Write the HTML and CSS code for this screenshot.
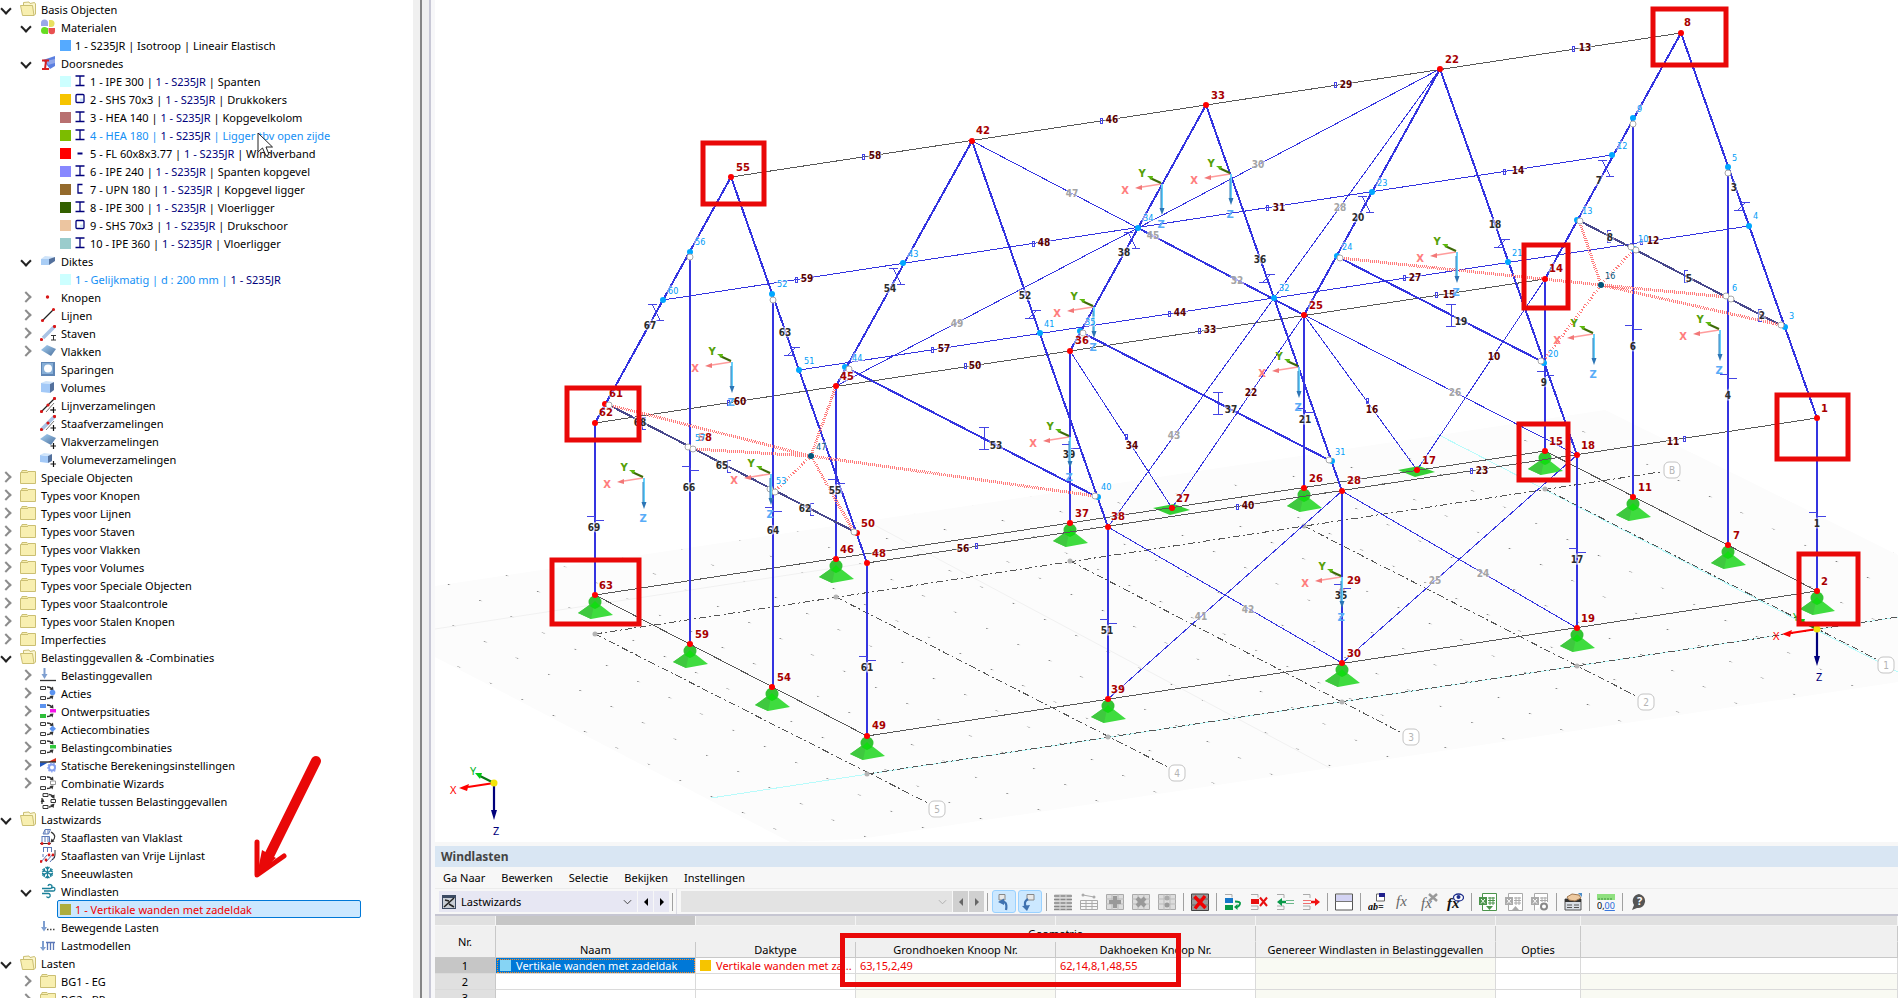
FILE: index.html
```html
<!DOCTYPE html>
<html lang="nl">
<head>
    <meta charset="UTF-8">
    <meta name="viewport" content="width=device-width, initial-scale=1.0">
    <title>Windlasten</title>
    <link rel="stylesheet" href="styles.css">
</head>
<body>
    <!-- icon sprites -->
    <svg class="sprites" aria-hidden="true">
        <defs>
            <linearGradient id="gBlue" x1="0" y1="0" x2="1" y2="1">
                <stop offset="0" stop-color="#a9d3f5"/><stop offset="1" stop-color="#4a6f9c"/>
            </linearGradient>
        </defs>
        <symbol id="folder" viewBox="0 0 16 16">
            <path d="M1.5 3.5L2 1.5H7L8 2.500H15.500V14.500H.5V3.500Z" fill="#f8efb0" stroke="#cbbf73"/>
            <path d="M1 3.500H8" stroke="#cbbf73"/>
        </symbol>
        <symbol id="folder-open" viewBox="0 0 16 16">
            <path d="M3.500 4V1.500L9 1L10 2.500L14.500 1.500L15.500 3V13L14 14.500" fill="#fbf6cf" stroke="#cbbf73"/>
            <path d="M.5 4.500H12.500L14 14.500H2.500Z" fill="#f8efb0" stroke="#cbbf73"/>
        </symbol>
        <symbol id="materials" viewBox="0 0 16 16">
            <path d="M1 7V4A3.500 3.500 0 0 1 8 4V7Z" fill="#9aa8e8"/>
            <path d="M9 8V1H11A3.500 3.500 0 0 1 11 8Z" fill="#e8e060"/>
            <circle cx="4.500" cy="11.500" r="3.500" fill="#66dd22"/><path d="M5 9H8V15H6Z" fill="#66dd22"/>
            <path d="M8.500 9H15V12A3.200 3.200 0 0 1 8.500 12Z" fill="#e85050"/>
        </symbol>
        <symbol id="sections" viewBox="0 0 16 16">
            <path d="M3 5L15 1V11L10 14Z" fill="#5b7fe0"/><path d="M6 6L15 4V8L8 10Z" fill="#8fa6ea"/>
            <path d="M2 5.500H9M2 14H9M6 6L5 14" stroke="#d82020" stroke-width="2" fill="none"/>
        </symbol>
        <symbol id="thickness" viewBox="0 0 16 16">
            <path d="M1 6L5 3L15 4L9 6Z" fill="#cfe4fa"/><path d="M1 6H9V12H1Z" fill="#a9cdf5"/><path d="M9 6L15 4V8L9 12Z" fill="#53709c"/>
        </symbol>
        <symbol id="node" viewBox="0 0 16 16"><circle cx="7.500" cy="8" r="1.700" fill="#d81818"/></symbol>
        <symbol id="line" viewBox="0 0 16 16">
            <path d="M2.500 13.500L13.500 2.500" stroke="#222" stroke-width="1.300"/>
            <path d="M2.500 13.500h.01M13.500 2.500h.01" stroke="#d81818" stroke-width="3.200" stroke-linecap="round"/>
        </symbol>
        <symbol id="member" viewBox="0 0 16 16">
            <path d="M3 13L14 2" stroke="#a9c2e4" stroke-width="3.500"/>
            <path d="M1.500 14.500h.01M14.500 1.500h.01" stroke="#d81818" stroke-width="3.200" stroke-linecap="round"/>
            <path d="M11 10.500H16M13.500 10.500V15M11 15H16" stroke="#333" fill="none"/>
        </symbol>
        <symbol id="surface" viewBox="0 0 16 16"><path d="M1 7L7 2L16 6L11 13Z" fill="url(#gBlue)"/></symbol>
        <symbol id="opening" viewBox="0 0 16 16">
            <rect x="1" y="1" width="14" height="14" fill="#5f86b5"/><rect x="2" y="2" width="11" height="11" fill="#86aed6"/>
            <circle cx="8" cy="7.500" r="4" fill="#fff"/>
        </symbol>
        <symbol id="solid" viewBox="0 0 16 16">
            <path d="M1 4L6 2L14 3L10 5Z" fill="#cfe4fa"/><path d="M1 4L10 5V14L1 13Z" fill="#a3c9f7"/><path d="M10 5L14 3V11L10 14Z" fill="#53709c"/>
        </symbol>
        <symbol id="plus" viewBox="0 0 16 16"><path d="M13.500 10V16M10.500 13H16" stroke="#111" stroke-width="1.200"/></symbol>
        <symbol id="lineset" viewBox="0 0 16 16">
            <path d="M6 15L14 6M10 13L14 13" stroke="#777"/>
            <path d="M1.500 14.500L14.500 1.500" stroke="#222" stroke-width="1.300"/>
            <path d="M1.500 14.500h.01M8 8h.01M14.500 1.500h.01" stroke="#d81818" stroke-width="3.200" stroke-linecap="round"/>
            <use href="#plus"/>
        </symbol>
        <symbol id="memberset" viewBox="0 0 16 16">
            <path d="M6 15L14 6" stroke="#777"/>
            <path d="M2 14L14.500 1.500" stroke="#a9c2e4" stroke-width="3.500"/>
            <path d="M1.500 14.500h.01M8 8h.01M14.500 1.500h.01" stroke="#d81818" stroke-width="3.200" stroke-linecap="round"/>
            <use href="#plus"/>
        </symbol>
        <symbol id="surfaceset" viewBox="0 0 16 16"><path d="M0 6L7 1L16 5L11 12Z" fill="url(#gBlue)"/><use href="#plus"/></symbol>
        <symbol id="solidset" viewBox="0 0 16 16">
            <path d="M0 4L8 5V12L0 11Z" fill="#a3c9f7"/><path d="M0 4L4 2L12 3L8 5Z" fill="#cfe4fa"/><path d="M8 5L12 3V10L8 12Z" fill="#53709c"/>
            <use href="#plus"/>
        </symbol>
        <symbol id="loadcase" viewBox="0 0 16 16">
            <path d="M4.500 1V8" stroke="#7f9fd0" stroke-width="2"/><path d="M1.500 7H7.500L4.500 12Z" fill="#7f9fd0"/>
            <path d="M0 13.500H16" stroke="#333" stroke-width="1.300"/>
        </symbol>
        <symbol id="flow" viewBox="0 0 16 16">
            <path d="M.6 1.600H5.500V4.500H.6ZM.6 11.600H5.500V14.500H.6Z" fill="#fff" stroke="#333"/>
            <path d="M7 2Q11 2 12 4.500M7 13.500Q11 13.500 12 11" stroke="#333" stroke-width="1.300" fill="none"/>
            <path d="M9.500 4.500L13 1.500L13.500 5.500ZM9.500 11L13.500 10.500L12.500 14.500Z" fill="#333"/>
        </symbol>
        <symbol id="actions" viewBox="0 0 16 16"><use href="#flow"/><circle cx="12.500" cy="7.500" r="2.800" fill="#5c94f0"/></symbol>
        <symbol id="design" viewBox="0 0 16 16">
            <use href="#flow"/><path d="M0 1H6V5H0Z" fill="#5c94f0"/><path d="M0 11H6V15H0Z" fill="#2fbf3a"/><path d="M10 6H16V9.500H10Z" fill="#f512e8"/>
        </symbol>
        <symbol id="actioncomb" viewBox="0 0 16 16"><use href="#flow"/><path d="M12.500 4.500L16 7.800L12.500 11L9.500 7.800Z" fill="#5c94f0"/></symbol>
        <symbol id="loadcomb" viewBox="0 0 16 16"><use href="#flow"/><path d="M10 6H16V9.500H10Z" fill="#2fc83a"/></symbol>
        <symbol id="static" viewBox="0 0 16 16">
            <path d="M0 5.500H8L0 10Z" fill="#1f55c0"/><path d="M8 5L16 1V5Z" fill="#d8321c"/><path d="M0 5H16" stroke="#222" stroke-width="1.300"/>
            <circle cx="12" cy="10.500" r="3" fill="#fff" stroke="#86a0f0" stroke-width="2"/>
            <circle cx="12" cy="10.500" r="4.300" fill="none" stroke="#86a0f0" stroke-width="1.200" stroke-dasharray="1.500 1.500"/>
        </symbol>
        <symbol id="combwiz" viewBox="0 0 16 16"><use href="#flow"/><path d="M10.500 6H15.500V9.500H10.500Z" fill="#fff" stroke="#999"/></symbol>
        <symbol id="relation" viewBox="0 0 16 16">
            <path d="M3 .6H8V3.500H3ZM3 12.500H8V15.500H3ZM11 6.500H15.500V9.500H11Z" fill="#fff" stroke="#333"/>
            <path d="M9 1.500Q13 2 13.500 5M9 14Q13 14 13.500 11M2 5V11" stroke="#333" stroke-width="1.300" fill="none"/>
            <path d="M10.500 3.500L14.500 1.500L14.500 6ZM.5 9L3 5.500L4.500 9ZM10 12L14.500 10.500L13.500 15Z" fill="#333"/>
        </symbol>
        <symbol id="areaload" viewBox="0 0 16 16">
            <path d="M3 5L5 .5H10.500L8.500 5ZM5 1V5M8 1V5M2 8V13M5 8V13M8 8V13M1.500 7.500H9.500V13" stroke="#5b78b8" fill="none"/>
            <path d="M0 14.500H11" stroke="#333"/><path d="M2 14.500h.01M9 14.500h.01" stroke="#d81818" stroke-width="3" stroke-linecap="round"/>
            <path d="M11 3Q18 7 12 12.500" stroke="#333" stroke-width="1.200" fill="none"/><path d="M10.500 13.500L11.500 9.500L14.500 12.500Z" fill="#333"/>
        </symbol>
        <symbol id="lineload" viewBox="0 0 16 16">
            <path d="M3 .5H12M3.500 .5V5M7.500 .5V5M11.500 .5V5M1 15L7 8M6 15L13 7M10 15L15 9M3 7L3 10" stroke="#5b78b8" fill="none"/>
            <path d="M1 14.500h.01M6 13h.01M9 8h.01M13 8h.01" stroke="#d81818" stroke-width="2.800" stroke-linecap="round"/>
            <path d="M15 3V8Q15 12 12 13" stroke="#333" fill="none"/>
        </symbol>
        <symbol id="snow" viewBox="0 0 16 16">
            <path d="M7.500 1.500V13.500M2.300 4.500L12.700 10.500M2.300 10.500L12.700 4.500M5.500 2L7.500 4L9.500 2M5.500 13L7.500 11L9.500 13M2 7L4.700 6L4 3.200M13 7L10.300 6L11 3.200M2 8.500L4.700 9.200L4 12M13 8.500L10.300 9.200L11 12" stroke="#1b8099" stroke-width="1.300" fill="none"/>
        </symbol>
        <symbol id="wind" viewBox="0 0 16 16">
            <path d="M2 5.500H9.500A2 2 0 1 0 8 3M4 8H13A1.800 1.800 0 1 0 11.500 5.500M2 10.500H8A2 2 0 1 1 6.500 13.500" stroke="#1b8099" stroke-width="1.300" fill="none"/>
        </symbol>
        <symbol id="moving" viewBox="0 0 16 16">
            <path d="M4 2V9" stroke="#7f9fd0" stroke-width="2"/><path d="M1 8H7L4 12.500Z" fill="#7f9fd0"/>
            <path d="M7 10.500H15" stroke="#444" stroke-width="1.500" stroke-dasharray="1.500 1.500"/>
        </symbol>
        <symbol id="loadmodel" viewBox="0 0 16 16">
            <path d="M3 4V11" stroke="#7f9fd0" stroke-width="2"/><path d="M0 10H6L3 14Z" fill="#7f9fd0"/>
            <path d="M6 5.500H15M7.500 5.500V13M10.500 5.500V13M13.500 5.500V13" stroke="#5b78b8" stroke-width="1.300" fill="none"/>
        </symbol>
        <symbol id="ibeam" viewBox="0 0 10 12"><path d="M.5 1H9.500M5 1V10.500M.5 10.500H9.500" stroke="#00007b" stroke-width="1.300" fill="none"/></symbol>
        <symbol id="tube" viewBox="0 0 10 12"><rect x="1" y="1.500" width="8" height="8" rx="1" fill="#fff" stroke="#00007b" stroke-width="1.300"/><path d="M5 5.500H8V8.500H5Z" fill="#cfe6f8"/></symbol>
        <symbol id="flat" viewBox="0 0 10 12"><path d="M2.500 6.500H7.500" stroke="#00007b" stroke-width="2"/></symbol>
        <symbol id="channel" viewBox="0 0 10 12"><path d="M7.500 1.500H3V10H7.500" stroke="#00007b" stroke-width="1.300" fill="none"/></symbol>
    </svg>

    <div class="workspace">
        <nav class="navigator" aria-label="Navigator">
            <ul class="tree">
                <li><div class="row"><button class="tw open" aria-label="Inklappen"></button><svg class="ic"><use href="#folder-open"/></svg>Basis Objecten</div>
                    <ul>
                        <li><div class="row"><button class="tw open" aria-label="Inklappen"></button><svg class="ic"><use href="#materials"/></svg>Materialen</div>
                            <ul>
                                <li><div class="row item"><i class="sw sky"></i>1 - S235JR | Isotroop | Lineair Elastisch</div></li>
                            </ul>
                        </li>
                        <li><div class="row"><button class="tw open" aria-label="Inklappen"></button><svg class="ic"><use href="#sections"/></svg>Doorsnedes</div>
                            <ul>
                                <li><div class="row item"><i class="sw ice"></i><svg class="sec"><use href="#ibeam"/></svg><span>1 - IPE 300 | <b>1 - S235JR</b> | Spanten</span></div></li>
                                <li><div class="row item"><i class="sw amber"></i><svg class="sec"><use href="#tube"/></svg><span>2 - SHS 70x3 | <b>1 - S235JR</b> | Drukkokers</span></div></li>
                                <li><div class="row item"><i class="sw rose"></i><svg class="sec"><use href="#ibeam"/></svg><span>3 - HEA 140 | <b>1 - S235JR</b> | Kopgevelkolom</span></div></li>
                                <li><div class="row item unused"><i class="sw lime"></i><svg class="sec"><use href="#ibeam"/></svg><span>4 - HEA 180 | <b>1 - S235JR</b> | Ligger tbv open zijde</span></div></li>
                                <li><div class="row item"><i class="sw red"></i><svg class="sec"><use href="#flat"/></svg><span>5 - FL 60x8x3.77 | <b>1 - S235JR</b> | Windverband</span></div></li>
                                <li><div class="row item"><i class="sw violet"></i><svg class="sec"><use href="#ibeam"/></svg><span>6 - IPE 240 | <b>1 - S235JR</b> | Spanten kopgevel</span></div></li>
                                <li><div class="row item"><i class="sw brown"></i><svg class="sec"><use href="#channel"/></svg><span>7 - UPN 180 | <b>1 - S235JR</b> | Kopgevel ligger</span></div></li>
                                <li><div class="row item"><i class="sw forest"></i><svg class="sec"><use href="#ibeam"/></svg><span>8 - IPE 300 | <b>1 - S235JR</b> | Vloerligger</span></div></li>
                                <li><div class="row item"><i class="sw peach"></i><svg class="sec"><use href="#tube"/></svg><span>9 - SHS 70x3 | <b>1 - S235JR</b> | Drukschoor</span></div></li>
                                <li><div class="row item"><i class="sw teal"></i><svg class="sec"><use href="#ibeam"/></svg><span>10 - IPE 360 | <b>1 - S235JR</b> | Vloerligger</span></div></li>
                            </ul>
                        </li>
                        <li><div class="row"><button class="tw open" aria-label="Inklappen"></button><svg class="ic"><use href="#thickness"/></svg>Diktes</div>
                            <ul>
                                <li><div class="row item unused"><i class="sw ice"></i><span>1 - Gelijkmatig | d : 200 mm | <b>1 - S235JR</b></span></div></li>
                            </ul>
                        </li>
                        <li><div class="row"><button class="tw" aria-label="Uitklappen"></button><svg class="ic"><use href="#node"/></svg>Knopen</div></li>
                        <li><div class="row"><button class="tw" aria-label="Uitklappen"></button><svg class="ic"><use href="#line"/></svg>Lijnen</div></li>
                        <li><div class="row"><button class="tw" aria-label="Uitklappen"></button><svg class="ic"><use href="#member"/></svg>Staven</div></li>
                        <li><div class="row"><button class="tw" aria-label="Uitklappen"></button><svg class="ic"><use href="#surface"/></svg>Vlakken</div></li>
                        <li><div class="row leaf"><svg class="ic"><use href="#opening"/></svg>Sparingen</div></li>
                        <li><div class="row leaf"><svg class="ic"><use href="#solid"/></svg>Volumes</div></li>
                        <li><div class="row leaf"><svg class="ic"><use href="#lineset"/></svg>Lijnverzamelingen</div></li>
                        <li><div class="row leaf"><svg class="ic"><use href="#memberset"/></svg>Staafverzamelingen</div></li>
                        <li><div class="row leaf"><svg class="ic"><use href="#surfaceset"/></svg>Vlakverzamelingen</div></li>
                        <li><div class="row leaf"><svg class="ic"><use href="#solidset"/></svg>Volumeverzamelingen</div></li>
                    </ul>
                </li>
                <li><div class="row"><button class="tw" aria-label="Uitklappen"></button><svg class="ic"><use href="#folder"/></svg>Speciale Objecten</div></li>
                <li><div class="row"><button class="tw" aria-label="Uitklappen"></button><svg class="ic"><use href="#folder"/></svg>Types voor Knopen</div></li>
                <li><div class="row"><button class="tw" aria-label="Uitklappen"></button><svg class="ic"><use href="#folder"/></svg>Types voor Lijnen</div></li>
                <li><div class="row"><button class="tw" aria-label="Uitklappen"></button><svg class="ic"><use href="#folder"/></svg>Types voor Staven</div></li>
                <li><div class="row"><button class="tw" aria-label="Uitklappen"></button><svg class="ic"><use href="#folder"/></svg>Types voor Vlakken</div></li>
                <li><div class="row"><button class="tw" aria-label="Uitklappen"></button><svg class="ic"><use href="#folder"/></svg>Types voor Volumes</div></li>
                <li><div class="row"><button class="tw" aria-label="Uitklappen"></button><svg class="ic"><use href="#folder"/></svg>Types voor Speciale Objecten</div></li>
                <li><div class="row"><button class="tw" aria-label="Uitklappen"></button><svg class="ic"><use href="#folder"/></svg>Types voor Staalcontrole</div></li>
                <li><div class="row"><button class="tw" aria-label="Uitklappen"></button><svg class="ic"><use href="#folder"/></svg>Types voor Stalen Knopen</div></li>
                <li><div class="row"><button class="tw" aria-label="Uitklappen"></button><svg class="ic"><use href="#folder"/></svg>Imperfecties</div></li>
                <li><div class="row"><button class="tw open" aria-label="Inklappen"></button><svg class="ic"><use href="#folder-open"/></svg>Belastinggevallen &amp; -Combinaties</div>
                    <ul>
                        <li><div class="row"><button class="tw" aria-label="Uitklappen"></button><svg class="ic"><use href="#loadcase"/></svg>Belastinggevallen</div></li>
                        <li><div class="row"><button class="tw" aria-label="Uitklappen"></button><svg class="ic"><use href="#actions"/></svg>Acties</div></li>
                        <li><div class="row"><button class="tw" aria-label="Uitklappen"></button><svg class="ic"><use href="#design"/></svg>Ontwerpsituaties</div></li>
                        <li><div class="row"><button class="tw" aria-label="Uitklappen"></button><svg class="ic"><use href="#actioncomb"/></svg>Actiecombinaties</div></li>
                        <li><div class="row"><button class="tw" aria-label="Uitklappen"></button><svg class="ic"><use href="#loadcomb"/></svg>Belastingcombinaties</div></li>
                        <li><div class="row"><button class="tw" aria-label="Uitklappen"></button><svg class="ic"><use href="#static"/></svg>Statische Berekeningsinstellingen</div></li>
                        <li><div class="row"><button class="tw" aria-label="Uitklappen"></button><svg class="ic"><use href="#combwiz"/></svg>Combinatie Wizards</div></li>
                        <li><div class="row leaf"><svg class="ic"><use href="#relation"/></svg>Relatie tussen Belastinggevallen</div></li>
                    </ul>
                </li>
                <li><div class="row"><button class="tw open" aria-label="Inklappen"></button><svg class="ic"><use href="#folder-open"/></svg>Lastwizards</div>
                    <ul>
                        <li><div class="row leaf"><svg class="ic"><use href="#areaload"/></svg>Staaflasten van Vlaklast</div></li>
                        <li><div class="row leaf"><svg class="ic"><use href="#lineload"/></svg>Staaflasten van Vrije Lijnlast</div></li>
                        <li><div class="row leaf"><svg class="ic"><use href="#snow"/></svg>Sneeuwlasten</div></li>
                        <li><div class="row"><button class="tw open" aria-label="Inklappen"></button><svg class="ic"><use href="#wind"/></svg>Windlasten</div>
                            <ul>
                                <li><div class="row item selected"><i class="sw olive"></i>1 - Vertikale wanden met zadeldak</div></li>
                            </ul>
                        </li>
                        <li><div class="row leaf"><svg class="ic"><use href="#moving"/></svg>Bewegende Lasten</div></li>
                        <li><div class="row leaf"><svg class="ic"><use href="#loadmodel"/></svg>Lastmodellen</div></li>
                    </ul>
                </li>
                <li><div class="row"><button class="tw open" aria-label="Inklappen"></button><svg class="ic"><use href="#folder-open"/></svg>Lasten</div>
                    <ul>
                        <li><div class="row"><button class="tw" aria-label="Uitklappen"></button><svg class="ic"><use href="#folder"/></svg>BG1 - EG</div></li>
                        <li><div class="row"><button class="tw" aria-label="Uitklappen"></button><svg class="ic"><use href="#folder"/></svg>BG2 - BP</div></li>
                    </ul>
                </li>
            </ul>
            <svg class="pointer" viewBox="0 0 18 26" aria-hidden="true"><path d="M1 1V20L5.500 16L9 24L12 22.500L9 15H15.500Z" fill="#fff" stroke="#222"/></svg>
            <svg class="arrow" viewBox="250 750 76 132" aria-hidden="true">
                <path d="M316 761L267 860" class="shaft"/>
                <path d="M257 842V875L284 856" class="head"/>
                <path d="M257 875L262 850L276 858Z" fill="#e90808"/>
            </svg>
        </nav>
        <div class="splitter"></div>

        <main class="main">
            <svg class="model" viewBox="435 0 1463 842" preserveAspectRatio="xMinYMin slice" role="img" aria-label="Model">
                <defs>
                    <pattern id="dots" width="60" height="40" patternUnits="userSpaceOnUse" patternTransform="matrix(.968 -.148 .79 .405 447 584)">
                        <rect width="1.200" height="2.500" fill="#777"/>
                    </pattern>
                    <g id="support">
                        <path d="M0 6L18 20L-4 24L-17 18Z" fill="#3fdc3f"/><path d="M0 6L-4 24L-17 18Z" fill="#3fc83f"/>
                        <circle cy="7" r="6.500" fill="#32c532"/><path d="M0 6L5 11L0 14L-5 11Z" fill="#12dc12"/>
                    </g>
                    <g id="plate"><path d="M-19 0L2 -4L18 2L-2 7Z" fill="#35cf35"/></g>
                    <g id="axes" class="local">
                        <path d="M-1 0L-20 3" stroke="#ff9c9c" stroke-width="1.700"/><path d="M-27 4L-20 1V6Z" fill="#f27878"/>
                        <path d="M-1 -1L-12 -6" stroke="#3d6a08" stroke-width="2"/><path d="M-15 -8L-9 -8L-10 -4Z" fill="#5cb80a"/>
                        <path d="M0 0V25" stroke="#66d0fb" stroke-width="2"/><path d="M-1 4V26" stroke="#2f7cba"/><path d="M-2.500 24H2.500L0 31Z" fill="#2c75b5"/>
                        <text x="-37" y="10" fill="#ff7d7d">X</text><text x="-20" y="-7" fill="#55a008">Y</text><text x="-1" y="44" fill="#58acf8">Z</text>
                    </g>
                    <g id="global">
                        <path d="M0 0L-26 4" stroke="#f00" stroke-width="2.200"/><path d="M-35 5L-25 1L-27 8Z" fill="#f00"/>
                        <path d="M0 0L-14 -7" stroke="#0a7a14" stroke-width="2.200"/><path d="M-19 -10L-12 -10L-14 -4Z" fill="#00c814"/>
                        <path d="M0 0V29" stroke="#00007b" stroke-width="2.200"/><path d="M-3 27H3L0 37Z" fill="#00007b"/>
                        <circle r="3.500" fill="#f2e40a"/>
                        <text x="-44" y="11" fill="#f00">X</text><text x="-24" y="-8" fill="#00b41e">Y</text><text x="-1" y="52" fill="#00007b">Z</text>
                    </g>
                    <path id="iCol" d="M-8 -2H0M-1 -2L1 1.500M0 2H9"/>
                    <path id="iMid" d="M-5 -11H5M0 -11V11M-5 11H5"/>
                    <path id="iLeft" d="M-8 -8H1M-4 -8L4 8M0 8H8"/>
                    <path id="iRight" d="M-1 -4H8M4 -4L-4 4M-8 4H2"/>
                    <path id="iSlot" d="M-1 -2.500H1V2.500H-1Z"/>
                    <path id="iUpn" d="M3 -6H-1V6H3"/>
                </defs>

                <!-- work plane -->
                <path d="M435 586L1605 410L1898 555V682L860 839L790 842L435 657Z" fill="#fcfcfc"/>
                <path d="M435 586L1605 410L1898 555V682L860 839L790 842L435 657Z" fill="url(#dots)"/>
                <path class="faint" d="M435 629L867 563M867 521L1330 768"/>
                <path class="cyan" d="M711 798L1898 617M1437 434L1898 672"/>
                <path class="grid" d="M595 634L1660 472M867 774L1898 617M595 634L928 803M836 597L1168 767M1070 561L1402 733M1304 526L1638 697M1545 489L1880 661"/>
                <path class="gdot" d="M595 634h.01M867 774h.01M836 597h.01M1108 737h.01M1070 561h.01M1342 702h.01M1304 526h.01M1577 666h.01M1545 489h.01"/>
                <g class="bubble">
                    <rect x="929" y="801" width="16" height="16" rx="5"/><text x="937" y="813">5</text>
                    <rect x="1169" y="765" width="16" height="16" rx="5"/><text x="1177" y="777">4</text>
                    <rect x="1403" y="729" width="16" height="16" rx="5"/><text x="1411" y="741">3</text>
                    <rect x="1638" y="694" width="16" height="16" rx="5"/><text x="1646" y="706">2</text>
                    <rect x="1878" y="657" width="16" height="16" rx="5"/><text x="1886" y="669">1</text>
                    <rect x="1664" y="462" width="16" height="16" rx="5"/><text x="1672" y="474">B</text>
                </g>

                <!-- supports -->
                <use href="#support" x="595" y="595"/><use href="#support" x="690" y="644"/><use href="#support" x="772" y="687"/>
                <use href="#support" x="836" y="559"/><use href="#support" x="867" y="736"/><use href="#support" x="1070" y="523"/>
                <use href="#support" x="1108" y="699"/><use href="#support" x="1304" y="488"/><use href="#support" x="1342" y="663"/>
                <use href="#support" x="1545" y="451"/><use href="#support" x="1577" y="628"/><use href="#support" x="1633" y="497"/>
                <use href="#support" x="1728" y="545"/><use href="#support" x="1817" y="591"/>
                <use href="#plate" x="1172" y="508"/><use href="#plate" x="1417" y="470"/>

                <!-- lines, purlins and bracing -->
                <path class="edge" d="M731 177L1681 33M595 423L1545 279M867 563L1817 418M595 595L1545 451M867 736L1817 591M595 595L867 736M1545 451L1817 591"/>
                <path class="purlin" d="M663 300L1612 155M799 370L1749 226"/>
                <path class="brace" d="M972 141L1304 315L1577 455M1440 69L1138 228L836 386M1440 69L1274 298L1108 527M1070 351L1172 508L1304 315L1417 470L1545 279M1342 491L1108 699M1108 527L1342 663L1577 455M1342 491L1577 628"/>
                <path class="beam" d="M1138 228L1304 315M849 369L1095 496M1083 333L1329 460M1340 258L1541 361"/>
                <path class="beam" d="M731 177L595 423M731 177L867 563M972 141L836 386M972 141L1108 527M1206 105L1070 351M1206 105L1342 491M1440 69L1304 315M1440 69L1577 455M1681 33L1545 279M1681 33L1817 418"/>
                <path class="beam" d="M595 423V595M690 257V644M773 294V687M867 563V736M836 386V559M1070 351V523M1108 527V699M1304 315V488M1342 491V663M1545 279V451M1577 455V628M1633 118V497M1728 167V545M1817 418V591"/>
                <path class="gable" d="M609 405L857 533M1580 221L1784 327"/>
                <path class="stab" d="M609 405L811 456L1095 496M693 449L811 456M836 386L811 456L854 532M1340 258L1601 285L1727 297M1601 285L1781 325M1580 223L1601 285"/>
                <path class="stab loose" d="M811 456L775 491M1633 250L1601 285L1543 361"/>

                <!-- section glyphs -->
                <g class="glyph">
                    <use href="#iCol" x="595" y="518"/><use href="#iCol" x="690" y="468"/><use href="#iCol" x="773" y="509"/><use href="#iCol" x="836" y="481"/>
                    <use href="#iCol" x="867" y="658"/><use href="#iCol" x="1070" y="446"/><use href="#iCol" x="1108" y="621"/><use href="#iCol" x="1305" y="410"/>
                    <use href="#iCol" x="1342" y="586"/><use href="#iCol" x="1577" y="550"/><use href="#iCol" x="1817" y="514"/><use href="#iCol" x="1545" y="373"/>
                    <use href="#iCol" x="1633" y="327"/><use href="#iCol" x="1728" y="376"/>
                    <use href="#iMid" x="1218" y="403"/><use href="#iMid" x="984" y="438"/><use href="#iMid" x="1451" y="315"/>
                    <use href="#iLeft" x="656" y="312"/><use href="#iLeft" x="897" y="276"/><use href="#iLeft" x="1132" y="240"/><use href="#iLeft" x="1366" y="204"/><use href="#iLeft" x="1606" y="168"/>
                    <use href="#iRight" x="792" y="351"/><use href="#iRight" x="1033" y="314"/><use href="#iRight" x="1267" y="278"/><use href="#iRight" x="1502" y="243"/><use href="#iRight" x="1742" y="206"/>
                    <use href="#iUpn" x="643" y="423"/><use href="#iUpn" x="728" y="466"/><use href="#iUpn" x="811" y="509"/><use href="#iUpn" x="1608" y="236"/><use href="#iUpn" x="1685" y="276"/><use href="#iUpn" x="1759" y="315"/>
                    <use href="#iSlot" x="863" y="157"/><use href="#iSlot" x="796" y="280"/><use href="#iSlot" x="728" y="403"/><use href="#iSlot" x="1101" y="121"/>
                    <use href="#iSlot" x="1335" y="85"/><use href="#iSlot" x="1267" y="208"/><use href="#iSlot" x="1033" y="244"/><use href="#iSlot" x="932" y="350"/>
                    <use href="#iSlot" x="965" y="366"/><use href="#iSlot" x="1169" y="314"/><use href="#iSlot" x="1199" y="331"/><use href="#iSlot" x="1404" y="278"/>
                    <use href="#iSlot" x="1573" y="49"/><use href="#iSlot" x="1504" y="172"/><use href="#iSlot" x="1436" y="295"/><use href="#iSlot" x="1641" y="242"/>
                    <use href="#iSlot" x="1684" y="439"/><use href="#iSlot" x="1471" y="471"/><use href="#iSlot" x="1237" y="507"/><use href="#iSlot" x="976" y="546"/>
                    <use href="#iSlot" x="1126" y="437"/><use href="#iSlot" x="1367" y="401"/>
                </g>

                <!-- nodes -->
                <path class="dot blue" d="M690 252h.01M663 300h.01M772 294h.01M799 370h.01M845 367h.01M903 263h.01M1138 228h.01M1274 298h.01M1372 192h.01M1337 256h.01M1080 331h.01M1040 333h.01M1098 497h.01M1332 461h.01M1612 155h.01M1633 118h.01M1728 167h.01M1749 226h.01M1577 220h.01M1508 262h.01M1785 327h.01M1544 363h.01M1634 249h.01"/>
                <path class="dot red" d="M731 177h.01M605 404h.01M595 423h.01M836 386h.01M595 595h.01M690 644h.01M772 687h.01M857 533h.01M836 559h.01M867 563h.01M867 736h.01M972 141h.01M1206 105h.01M1440 69h.01M1681 33h.01M1304 315h.01M1070 351h.01M1108 527h.01M1070 523h.01M1108 699h.01M1172 508h.01M1304 488h.01M1342 491h.01M1342 663h.01M1417 470h.01M1545 279h.01M1817 418h.01M1817 591h.01M1728 545h.01M1633 497h.01M1545 451h.01M1577 455h.01M1577 628h.01"/>
                <path class="dot dark" d="M811 456h.01M1601 285h.01"/>
                <path class="dot dim" d="M1342 591h.01"/>
                <g class="hinge">
                    <circle cx="690" cy="257" r="3"/><circle cx="773" cy="300" r="3"/><circle cx="609" cy="405" r="3"/><circle cx="688" cy="447" r="3"/><circle cx="693" cy="449" r="3"/>
                    <circle cx="849" cy="369" r="3"/><circle cx="770" cy="489" r="3"/><circle cx="775" cy="492" r="3"/><circle cx="854" cy="532" r="3"/><circle cx="1083" cy="333" r="3"/>
                    <circle cx="1095" cy="496" r="3"/><circle cx="1329" cy="460" r="3"/><circle cx="1340" cy="258" r="3"/><circle cx="1541" cy="361" r="3"/><circle cx="1633" cy="124" r="3"/>
                    <circle cx="1728" cy="173" r="3"/><circle cx="1580" cy="221" r="3"/><circle cx="1631" cy="247" r="3"/><circle cx="1636" cy="250" r="3"/><circle cx="1726" cy="296" r="3"/>
                    <circle cx="1731" cy="299" r="3"/><circle cx="1781" cy="325" r="3"/>
                </g>

                <!-- member numbers -->
                <g class="num sec-num">
                    <text x="875" y="159">58</text><text x="807" y="282">59</text><text x="740" y="405">60</text><text x="1112" y="123">46</text><text x="1346" y="88">29</text>
                    <text x="1279" y="211">31</text><text x="1044" y="246">48</text><text x="944" y="352">57</text><text x="975" y="369">50</text><text x="1180" y="316">44</text>
                    <text x="1210" y="333">33</text><text x="1251" y="396">22</text><text x="1372" y="413">16</text><text x="1415" y="281">27</text><text x="1132" y="449">34</text>
                    <text x="963" y="552">56</text><text x="1248" y="509">40</text><text x="1585" y="51">13</text><text x="1518" y="174">14</text><text x="1653" y="244">12</text>
                    <text x="1449" y="298">15</text><text x="1494" y="360">10</text><text x="1482" y="474">23</text><text x="1673" y="445">11</text>
                </g>
                <g class="num beam-num">
                    <text x="650" y="329">67</text><text x="785" y="336">63</text><text x="890" y="292">54</text><text x="640" y="426">68</text><text x="689" y="491">66</text>
                    <text x="722" y="469">65</text><text x="594" y="531">69</text><text x="805" y="512">62</text><text x="773" y="534">64</text><text x="835" y="494">55</text>
                    <text x="867" y="671">61</text><text x="1358" y="221">20</text><text x="1124" y="256">38</text><text x="1260" y="263">36</text><text x="1025" y="299">52</text>
                    <text x="1231" y="413">37</text><text x="1305" y="423">21</text><text x="996" y="449">53</text><text x="1069" y="458">39</text><text x="1107" y="634">51</text>
                    <text x="1341" y="599">35</text><text x="1599" y="184">7</text><text x="1495" y="228">18</text><text x="1610" y="241">8</text><text x="1461" y="325">19</text>
                    <text x="1689" y="282">5</text><text x="1734" y="191">3</text><text x="1762" y="319">2</text><text x="1544" y="386">9</text><text x="1633" y="350">6</text>
                    <text x="1728" y="399">4</text><text x="1577" y="563">17</text><text x="1817" y="527">1</text>
                </g>
                <g class="num brace-num">
                    <text x="1072" y="197">47</text><text x="1258" y="168">30</text><text x="1340" y="211">28</text><text x="1153" y="239">45</text><text x="1237" y="284">32</text>
                    <text x="957" y="327">49</text><text x="1174" y="439">43</text><text x="1201" y="620">41</text><text x="1248" y="613">42</text><text x="1455" y="396">26</text>
                    <text x="1483" y="577">24</text><text x="1435" y="584">25</text>
                </g>

                <!-- local and global axes -->
                <g class="axis">
                    <use href="#axes" x="732" y="362"/><use href="#axes" x="644" y="478"/><use href="#axes" x="771" y="474"/><use href="#axes" x="1162" y="184"/>
                    <use href="#axes" x="1231" y="174"/><use href="#axes" x="1094" y="307"/><use href="#axes" x="1299" y="367"/><use href="#axes" x="1070" y="437"/>
                    <use href="#axes" x="1342" y="577"/><use href="#axes" x="1457" y="252"/><use href="#axes" x="1594" y="334"/><use href="#axes" x="1720" y="330"/>
                    <use href="#global" x="494" y="783"/><use href="#global" x="1817" y="629"/>
                </g>

                <!-- node numbers -->
                <g class="nid red-id">
                    <text x="698" y="441">58</text>
                    <text x="736" y="171">55</text><text x="609" y="397">61</text><text x="599" y="416">62</text><text x="840" y="380">45</text><text x="599" y="589">63</text>
                    <text x="695" y="638">59</text><text x="777" y="681">54</text><text x="861" y="527">50</text><text x="840" y="553">46</text><text x="872" y="557">48</text>
                    <text x="872" y="729">49</text><text x="976" y="134">42</text><text x="1211" y="99">33</text><text x="1445" y="63">22</text><text x="1684" y="26">8</text>
                    <text x="1309" y="309">25</text><text x="1075" y="344">36</text><text x="1111" y="520">38</text><text x="1075" y="517">37</text><text x="1111" y="693">39</text>
                    <text x="1176" y="502">27</text><text x="1309" y="482">26</text><text x="1347" y="484">28</text><text x="1347" y="657">30</text><text x="1347" y="584">29</text>
                    <text x="1422" y="464">17</text><text x="1549" y="272">14</text><text x="1821" y="412">1</text><text x="1821" y="585">2</text><text x="1733" y="539">7</text>
                    <text x="1638" y="491">11</text><text x="1549" y="445">15</text><text x="1581" y="449">18</text><text x="1581" y="622">19</text>
                </g>
                <g class="nid blue-id">
                    <text x="695" y="245">56</text><text x="668" y="294">60</text><text x="777" y="287">52</text><text x="804" y="364">51</text><text x="852" y="361">44</text>
                    <text x="908" y="257">43</text><text x="776" y="484">53</text><text x="1143" y="221">34</text><text x="1279" y="291">32</text><text x="1377" y="186">23</text>
                    <text x="1342" y="250">24</text><text x="1044" y="327">41</text><text x="1085" y="325">35</text><text x="1335" y="455">31</text><text x="1101" y="490">40</text>
                    <text x="1617" y="149">12</text><text x="1637" y="112">9</text><text x="1732" y="161">5</text><text x="1753" y="219">4</text><text x="1582" y="214">13</text>
                    <text x="1638" y="242">10</text><text x="1512" y="256">21</text><text x="1732" y="291">6</text><text x="1789" y="319">3</text><text x="1548" y="357">20</text>
                    <text x="816" y="450" class="dark-id">47</text><text x="1605" y="279" class="dark-id">16</text>
                    <text x="695" y="441">57</text>
                </g>

                <!-- marked corner nodes -->
                <g class="mark">
                    <rect x="703" y="143" width="61" height="61"/><rect x="567" y="388" width="72" height="52"/><rect x="552" y="560" width="87" height="64"/>
                    <rect x="1653" y="9" width="73" height="56"/><rect x="1524" y="245" width="44" height="63"/><rect x="1519" y="424" width="49" height="56"/>
                    <rect x="1777" y="395" width="71" height="64"/><rect x="1799" y="554" width="59" height="70"/>
                </g>
            </svg>

            <section class="tables">
                <h1 class="caption">Windlasten</h1>
                <div class="menubar">
                    <button>Ga Naar</button><button>Bewerken</button><button>Selectie</button><button>Bekijken</button><button>Instellingen</button>
                </div>
                <div class="toolbar">
                    <div class="combo">
                        <svg class="combo-ic" viewBox="0 0 14 14"><path d="M0 0H14V14H0Z" fill="#3b4a63"/><path d="M1 3H13V13H1Z" fill="#c9ced6"/><path d="M2 12L12 3M3 5L7 6M7 9L12 12" stroke="#222" stroke-width="1.500"/></svg>
                        <select aria-label="Tabelgroep"><option>Lastwizards</option></select>
                        <svg class="chev" viewBox="0 0 10 6"><path d="M1 1L5 5L9 1"/></svg>
                    </div>
                    <button class="step" aria-label="Vorige"><svg viewBox="0 0 6 8"><path d="M5 0V8L1 4Z"/></svg></button>
                    <button class="step" aria-label="Volgende"><svg viewBox="0 0 6 8"><path d="M1 0V8L5 4Z"/></svg></button>
                    <span class="sep"></span><span class="grip"></span>
                    <div class="combo off">
                        <select aria-label="Belastinggeval" disabled><option></option></select>
                        <svg class="chev" viewBox="0 0 10 6"><path d="M1 1L5 5L9 1"/></svg>
                    </div>
                    <button class="step off" aria-label="Vorig belastinggeval" disabled><svg viewBox="0 0 6 8"><path d="M5 0V8L1 4Z"/></svg></button>
                    <button class="step off" aria-label="Volgend belastinggeval" disabled><svg viewBox="0 0 6 8"><path d="M1 0V8L5 4Z"/></svg></button>
                    <span class="sep"></span>
                    <button class="tool on" aria-label="Selectie synchroniseren"><svg viewBox="0 0 18 18"><path d="M4 1.500H10V7H4Z" fill="#e8e8e8" stroke="#888"/><path d="M5 9Q13 7 11 17" stroke="#3f72b0" stroke-width="2.200" fill="none"/><path d="M3 9L9 5.500V12Z" fill="#3f72b0"/></svg></button>
                    <button class="tool on" aria-label="Weergave synchroniseren"><svg viewBox="0 0 18 18"><path d="M6 1.500H13V7H6Z" fill="#e8e8e8" stroke="#888"/><path d="M7 6Q2 9 5 14" stroke="#3f72b0" stroke-width="2.200" fill="none"/><path d="M1 13L9 12L6 18Z" fill="#3f72b0"/></svg></button>
                    <span class="sep"></span>
                    <button class="tool" aria-label="Tabel"><svg viewBox="0 0 18 18"><path d="M.5 1H17.500V17H.5Z" fill="#d8d8d8"/><path d="M0 3H18M0 6.500H18M0 10H18M0 13.500H18M0 16.500H18" stroke="#888" stroke-width="1.300"/><path d="M6 1V17M12 1V17" stroke="#d8d8d8"/></svg></button>
                    <button class="tool" aria-label="Lijnen in tabel"><svg viewBox="0 0 18 18"><path d="M3 2L14 4" stroke="#aaa"/><path d="M3 2h.01M14 4h.01" stroke="#aaa" stroke-width="3" stroke-linecap="round"/><path d="M.5 7.500H17.500V16.500H.5ZM.5 10.500H17.500M.5 13.500H17.500M6 7.500V16.500M12 7.500V16.500" stroke="#aaa" fill="none"/></svg></button>
                    <button class="tool" aria-label="Rij toevoegen"><svg viewBox="0 0 18 18"><path d="M.5 1.500H17.500V16.500H.5Z" fill="#dcdcdc" stroke="#aaa"/><path d="M0 6H18M0 11H18M6 1V17M12 1V17" stroke="#bbb"/><path d="M9 3V15M3 9H15" stroke="#999" stroke-width="4"/></svg></button>
                    <button class="tool" aria-label="Rij wissen"><svg viewBox="0 0 18 18"><path d="M.5 1.500H17.500V16.500H.5Z" fill="#dcdcdc" stroke="#aaa"/><path d="M0 6H18M0 11H18M6 1V17M12 1V17" stroke="#bbb"/><path d="M5 5L13 13M13 5L5 13" stroke="#999" stroke-width="4"/></svg></button>
                    <button class="tool" aria-label="Status"><svg viewBox="0 0 18 18"><path d="M.5 1.500H17.500V16.500H.5Z" fill="#dcdcdc" stroke="#aaa"/><path d="M0 6H18M0 11H18M6 1V17M12 1V17" stroke="#bbb"/><circle cx="9" cy="5" r="2.500" fill="#aaa"/><circle cx="9" cy="12" r="2.500" fill="#999"/></svg></button>
                    <span class="sep"></span>
                    <button class="tool" aria-label="Alles verwijderen"><svg viewBox="0 0 18 18"><path d="M.5 1H17.500V17.500H.5Z" fill="#999" stroke="#444"/><path d="M0 6H18M0 12H18" stroke="#666"/><path d="M3.500 3.500L14.500 15M14 3L4 15.500" stroke="#f00000" stroke-width="3.500"/></svg></button>
                    <span class="sep"></span>
                    <button class="tool" aria-label="Rij kopi&euml;ren"><svg viewBox="0 0 18 18"><path d="M1 1.500H8V4.500" stroke="#aaa" fill="none"/><path d="M1 5H9V10H1Z" fill="#1577c8"/><path d="M1 12H9V17H1Z" fill="#089a48"/><path d="M11 8.500Q17 8.500 16 11Q15 14 12 14" stroke="#089a48" stroke-width="1.800" fill="none"/><path d="M10 14L13.500 11V17Z" fill="#089a48"/></svg></button>
                    <button class="tool" aria-label="Rij verwijderen"><svg viewBox="0 0 18 18"><path d="M1 1.500H8V4.500M1 16.500H8V13H1" stroke="#aaa" fill="none"/><path d="M1 6H9V11H1Z" fill="#e81010"/><path d="M10 4.500L17 13M17 4.500L10 13" stroke="#e81010" stroke-width="2"/></svg></button>
                    <button class="tool" aria-label="Rij invoegen"><svg viewBox="0 0 18 18"><path d="M1 1.500H8V5M1 16.500H8V13H1" stroke="#aaa" fill="none"/><path d="M5 9H10" stroke="#089a48" stroke-width="2.500"/><path d="M1 9L6 5V13Z" fill="#089a48"/><path d="M10 7.500H18M10 10.500H18" stroke="#6cb88a"/></svg></button>
                    <button class="tool" aria-label="Rij uitnemen"><svg viewBox="0 0 18 18"><path d="M1 1.500H8V5M1 16.500H8V13H1" stroke="#aaa" fill="none"/><path d="M1 7.500H9M1 10.500H9" stroke="#f07070"/><path d="M9 9H14" stroke="#f01010" stroke-width="2.500"/><path d="M18 9L13 5V13Z" fill="#f01010"/></svg></button>
                    <span class="sep"></span>
                    <button class="tool" aria-label="Kolommen"><svg viewBox="0 0 18 18"><path d="M.5 1H17.500V17H.5Z" fill="#fff" stroke="#555"/><path d="M1 2H17V8H1Z" fill="#d3d3f3"/><path d="M.5 8.500H17.500" stroke="#777"/></svg></button>
                    <span class="sep"></span>
                    <button class="tool" aria-label="Commentaar"><svg viewBox="0 0 18 18"><path d="M8.500 1H16.500V8H8.500Z" fill="#fff" stroke="#666"/><path d="M11 0H17V4H11Z" fill="#20208c"/><text x="0" y="17" class="ab">ab=</text></svg></button>
                    <button class="tool" aria-label="Formule"><svg viewBox="0 0 18 18"><text x="2" y="13" class="fx">fx</text></svg></button>
                    <button class="tool" aria-label="Formule wissen"><svg viewBox="0 0 18 18"><text x="1" y="15" class="fx">fx</text><path d="M9 1L17 8M17 1L9 8" stroke="#999" stroke-width="2.500"/></svg></button>
                    <button class="tool" aria-label="Formule tonen"><svg viewBox="0 0 18 18"><text x="1" y="15" class="fx dark">fx</text><ellipse cx="12.500" cy="4.500" rx="5" ry="3.500" fill="#fff" stroke="#20308c" stroke-width="1.300"/><circle cx="12.500" cy="4" r="2" fill="#20308c"/></svg></button>
                    <span class="sep"></span>
                    <button class="tool" aria-label="Exporteren naar Excel"><svg viewBox="0 0 18 18"><path d="M3.500 .5H17.500V17.500H3.500Z" fill="#fff" stroke="#4c944c"/><path d="M0 4H8V12H0Z" fill="#4c944c"/><path d="M2 6L6 10.500M6 6L2 10.500" stroke="#fff"/><path d="M9 5H16M9 7.500H16M9 10H16M11 4V12M14 4V12" stroke="#4c944c"/><path d="M7 13H14L10.500 17Z" fill="#4c944c"/></svg></button>
                    <button class="tool" aria-label="Importeren uit Excel"><svg viewBox="0 0 18 18"><path d="M3.500 .5H17.500V17.500H3.500Z" fill="#fff" stroke="#aaa"/><path d="M0 4H8V12H0Z" fill="#aaa"/><path d="M2 6L6 10.500M6 6L2 10.500" stroke="#fff"/><path d="M9 5H16M9 7.500H16M9 10H16M11 4V12M14 4V12" stroke="#aaa"/><path d="M7 17H14L10.500 13Z" fill="#aaa"/></svg></button>
                    <button class="tool" aria-label="Excel-instellingen"><svg viewBox="0 0 18 18"><path d="M3.500 17.500V.5H16.500V9" fill="#fff" stroke="#aaa"/><path d="M0 4H8V12H0Z" fill="#aaa"/><path d="M2 6L6 10.500M6 6L2 10.500" stroke="#fff"/><path d="M9 5H16M9 7.500H16M11 4V9M14 4V9" stroke="#aaa"/><circle cx="13" cy="13.500" r="3" fill="#fff" stroke="#888" stroke-width="2"/></svg></button>
                    <span class="sep"></span>
                    <button class="tool" aria-label="Instellingen"><svg viewBox="0 0 18 18"><path d="M1 6H17V17H1Z" fill="#d8dde4" stroke="#555"/><path d="M1 6H17V9H1Z" fill="#333"/><path d="M3 12H8M10 12H15M3 14.500H8M10 14.500H15" stroke="#555"/><path d="M3 4L8 1L15 2L17 5L11 8L5 7Z" fill="#edc9a0" stroke="#a07850"/><path d="M14 0H18V4Z" fill="#4c8cc8"/></svg></button>
                    <span class="sep"></span>
                    <button class="tool" aria-label="Decimalen"><svg viewBox="0 0 18 18"><path d="M0 1H18V7H0Z" fill="#8fe07f"/><path d="M2 7V5M5 7V5M8 7V5M11 7V5M14 7V5" stroke="#3c8c3c"/><text x="0" y="16" class="dec">0,<tspan fill="#2468d8" text-decoration="underline">00</tspan></text></svg></button>
                    <span class="sep"></span>
                    <button class="tool" aria-label="Help"><svg viewBox="0 0 18 18"><path d="M9 1A7 7 0 1 1 7 15L2 17L4 12A7 7 0 0 1 9 1Z" fill="#555"/><text x="9.500" y="12" class="q">?</text></svg></button>
                </div>
                <div class="grid-wrap">
                    <table class="sheet">
                        <colgroup><col class="c-nr"><col class="c-name"><col class="c-type"><col class="c-node"><col class="c-node"><col class="c-gen"><col class="c-opt"><col></colgroup>
                        <thead>
                            <tr class="strip"><td></td><td class="cur"></td><td></td><td></td><td></td><td></td><td></td><td></td></tr>
                            <tr class="group"><th rowspan="2" scope="col" class="nr">Nr.</th><th class="flat"></th><th></th><th colspan="2" scope="colgroup">Geometrie</th><th></th><th></th><th></th></tr>
                            <tr class="names"><th scope="col">Naam</th><th scope="col">Daktype</th><th scope="col">Grondhoeken Knoop Nr.</th><th scope="col">Dakhoeken Knoop Nr.</th><th scope="col">Genereer Windlasten in Belastinggevallen</th><th scope="col">Opties</th><th></th></tr>
                        </thead>
                        <tbody>
                            <tr class="err"><th scope="row" class="cur">1</th><td class="active"><i class="sw aqua"></i>Vertikale wanden met zadeldak</td><td><i class="sw amber"></i>Vertikale wanden met za...</td><td>63,15,2,49</td><td>62,14,8,1,48,55</td><td class="ro"></td><td></td><td></td></tr>
                            <tr><th scope="row">2</th><td></td><td></td><td class="ro"></td><td></td><td class="ro"></td><td></td><td class="ro"></td></tr>
                            <tr><th scope="row">3</th><td></td><td></td><td class="ro"></td><td></td><td class="ro"></td><td></td><td class="ro"></td></tr>
                        </tbody>
                    </table>
                    <div class="frame"></div>
                </div>
            </section>
        </main>
    </div>
</body>
</html>
```
FILE: styles.css
```css
* {
    box-sizing: border-box;
}
body {
    margin: 0;
    font-family: "Noto Sans", "Open Sans", sans-serif;
    font-size: 11px;
    color: #000;
    background: #fff;
}
button, select {
    font: inherit;
    color: inherit;
    border: none;
    background: none;
    padding: 0;
    margin: 0;
}
.sprites {
    position: absolute;
    width: 0;
    height: 0;
}
.workspace {
    display: flex;
    height: 100vh;
    overflow: hidden;
}

/* navigator tree */
.navigator {
    position: relative;
    flex: 0 0 420px;
    overflow: hidden;
    border-right: 7px solid #f0f0f0;
}
.splitter {
    flex: 0 0 11px;
    background: #f0f0f0;
    border-left: 2px solid #868686;
    border-right: 2px solid #c8c8d6;
}
.tree, .tree ul {
    list-style: none;
    margin: 0;
    padding: 0;
}
.tree ul {
    padding-left: 20px;
}
.row {
    display: flex;
    align-items: center;
    height: 18px;
    padding-left: 1px;
    white-space: pre;
}
.row.leaf {
    padding-left: 20px;
}
.row b {
    font-weight: normal;
    color: #00007b;
}
.tw {
    width: 10px;
    height: 10px;
    margin-right: 9px;
    display: flex;
    align-items: center;
    justify-content: center;
}
.tw::before {
    content: "";
    width: 6px;
    height: 6px;
    border: solid #8c8c8c;
    border-width: 2px 2px 0 0;
    transform: rotate(45deg);
}
.tw.open::before {
    border-color: #222;
    border-width: 0 2px 2px 0;
}
.ic {
    width: 16px;
    height: 16px;
    margin-right: 5px;
    flex: none;
}
.item {
    margin: 0 52px 0 17px;
    padding-left: 3px;
}
.item .sec {
    width: 10px;
    height: 12px;
    margin-right: 5px;
    flex: none;
}
.item.unused {
    color: #1590f5;
}
.item.selected {
    color: #f00000;
    background: #cce8ff;
    border: 1px solid #0078d7;
    border-radius: 2px;
    padding-left: 2px;
}
.sw {
    display: inline-block;
    width: 11px;
    height: 11px;
    margin-right: 5px;
    flex: none;
}
.item .sw {
    margin-right: 4px;
}
.sw.sky { background: #55aaff; }
.sw.ice { background: #ccffff; }
.sw.amber { background: #f6c400; }
.sw.rose { background: #b87070; }
.sw.lime { background: #7cbc00; }
.sw.red { background: #ff0000; }
.sw.violet { background: #8888ff; }
.sw.brown { background: #946a2c; }
.sw.forest { background: #336000; }
.sw.peach { background: #ecc5a0; }
.sw.teal { background: #9acccc; }
.sw.olive { background: #adad3e; }
.sw.aqua { background: #86d4f4; }
.pointer {
    position: absolute;
    left: 257px;
    top: 132px;
    width: 18px;
    height: 26px;
}
.arrow {
    position: absolute;
    left: 250px;
    top: 750px;
    width: 76px;
    height: 132px;
}
.shaft, .head {
    fill: none;
    stroke: #e90808;
    stroke-linecap: round;
    stroke-linejoin: round;
}
.shaft { stroke-width: 10; }
.head { stroke-width: 5; }

/* model view */
.main {
    flex: 1;
    min-width: 0;
    display: flex;
    flex-direction: column;
    border-left: 4px solid #f7f7f9;
}
.model {
    flex: 1;
    min-height: 0;
    width: 100%;
    display: block;
    background: #fff;
}
.faint { stroke: #f1f1f1; fill: none; }
.cyan { stroke: #b8fbfb; fill: none; }
.grid {
    stroke: #555;
    fill: none;
    stroke-dasharray: 7 3 2 3;
}
.grid, .edge, .purlin, .brace, .beam, .gable, .stab, .glyph, .cyan {
    shape-rendering: crispEdges;
}
.gdot {
    stroke: #b4b4b4;
    stroke-width: 5;
    stroke-linecap: round;
}
.bubble rect {
    fill: #fff;
    stroke: #c4c4c4;
}
.bubble text {
    font: 10px "DejaVu Sans Condensed", sans-serif;
    fill: #b4b4b4;
    text-anchor: middle;
}
.edge { stroke: #585858; fill: none; }
.purlin { stroke: #3434e0; fill: none; }
.brace { stroke: #3434e0; fill: none; }
.beam {
    stroke: #3434e0;
    stroke-width: 2;
    fill: none;
}
.gable {
    stroke: #48488c;
    stroke-width: 2;
    fill: none;
}
.stab {
    stroke: #ff7c7c;
    stroke-width: 3;
    stroke-dasharray: 1 1;
    fill: none;
}
.stab.loose { stroke-dasharray: 1 2; }
.glyph {
    stroke: #4444e4;
    fill: none;
}
.dot {
    stroke-width: 6;
    stroke-linecap: round;
}
.dot.blue { stroke: #00a8ff; }
.dot.red { stroke: #ff0000; }
.dot.dark { stroke: #00567c; }
.dot.dim { stroke: #d88098; }
.hinge {
    fill: #fff;
    stroke: #a8a8a8;
}
.axis text, .local text {
    font: 10px "DejaVu Sans", sans-serif;
    text-anchor: middle;
}
.local text {
    font-weight: bold;
}
.num text {
    font: bold 10px "DejaVu Sans Condensed", "DejaVu Sans", sans-serif;
    text-anchor: middle;
    paint-order: stroke;
    stroke: rgba(255, 255, 255, 0.5);
    stroke-width: 3px;
}
.sec-num { fill: #5a0000; }
.beam-num { fill: #2c2c2c; }
.brace-num { fill: #a4a4a4; }
.nid {
    font: bold 10px "DejaVu Sans", sans-serif;
    paint-order: stroke;
    stroke: rgba(255, 255, 255, 0.5);
    stroke-width: 3px;
}
.red-id { fill: #a80000; }
.blue-id {
    font: 9px "DejaVu Sans Condensed", "DejaVu Sans", sans-serif;
    fill: #009cf8;
}
.dark-id { fill: #00567c; }
.mark rect {
    fill: none;
    stroke: #e90808;
    stroke-width: 5;
}

/* docked tables */
.tables {
    flex: 0 0 156px;
    display: flex;
    flex-direction: column;
    padding-top: 4px;
    background: #f7f7f7;
    overflow: hidden;
}
.caption {
    flex: none;
    margin: 0;
    padding-left: 6px;
    font-size: 12px;
    line-height: 21px;
    color: #444;
    background: #d9e6f3;
}
.menubar {
    display: flex;
    flex: none;
    gap: 16px;
    height: 21px;
    padding-left: 8px;
}
.toolbar {
    display: flex;
    flex: none;
    align-items: center;
    height: 28px;
    padding-left: 4px;
    border-top: 1px solid #ececec;
    border-bottom: 2px solid #c6c6d2;
}
.combo {
    position: relative;
    display: flex;
    align-items: center;
    width: 198px;
    height: 21px;
    padding-left: 3px;
    background: #e7e7f3;
}
.combo-ic {
    width: 14px;
    height: 14px;
    margin-right: 5px;
}
.combo select {
    appearance: none;
    flex: 1;
    height: 21px;
}
.combo.off {
    width: 271px;
    background: #e3e3e3;
}
.chev {
    position: absolute;
    right: 5px;
    top: 8px;
    width: 9px;
    height: 6px;
    fill: none;
    stroke: #333;
    pointer-events: none;
}
.off .chev { stroke: #aaa; }
.step {
    width: 15px;
    height: 21px;
    margin-left: 1px;
    background: #e7e7f3;
}
.step svg {
    width: 6px;
    height: 8px;
}
.step.off {
    background: #d0d0d0;
    fill: #666;
}
.sep {
    width: 1px;
    height: 18px;
    margin: 0 3px;
    background: #a0a0a0;
}
.grip {
    width: 1px;
    height: 25px;
    margin-right: 4px;
    background: #dcdce4;
}
.tool {
    display: flex;
    align-items: center;
    justify-content: center;
    width: 24px;
    height: 23px;
    margin: 0 1px;
}
.tool svg {
    width: 18px;
    height: 18px;
}
.tool.on {
    background: #cce8ff;
    border: 1px solid #99d1ff;
    border-radius: 3px;
}
.fx {
    font: italic 15px "Liberation Serif", serif;
    fill: #666;
}
.fx.dark {
    font-weight: bold;
    fill: #111;
}
.ab { font: italic bold 10px "Liberation Serif", serif; }
.dec { font: 9px "Noto Sans", sans-serif; }
.q {
    font: bold 11px "Noto Sans", sans-serif;
    fill: #fff;
    text-anchor: middle;
}

/* sheet */
.grid-wrap {
    position: relative;
    flex: 1;
    min-height: 0;
    background: #fff;
}
.sheet {
    width: 100%;
    table-layout: fixed;
    border-collapse: separate;
    border-spacing: 0;
    line-height: 15px;
    white-space: nowrap;
}
.c-nr { width: 61px; }
.c-name { width: 200px; }
.c-type { width: 160px; }
.c-node { width: 200px; }
.c-gen { width: 240px; }
.c-opt { width: 85px; }
.sheet th, .sheet td {
    height: 16px;
    padding: 0 0 0 4px;
    font-weight: normal;
    border-right: 1px solid #dadada;
    border-bottom: 1px solid #dadada;
}
.sheet th {
    padding: 0;
    background: #f0f0f0;
    border-right-color: #c8c8c8;
}
.sheet tbody th {
    background: #e0e0e0;
}
.sheet .strip td {
    height: 10px;
    background: #e0e0e0;
    border-right-color: #f4f4f4;
    border-bottom-color: #f4f4f4;
}
.sheet .strip .cur, .sheet tbody .cur {
    background: #c6c6c6;
}
.sheet .group th {
    border-bottom-color: #f0f0f0;
}
.sheet .group .flat, .sheet .group .flat + th {
    border-right-color: #f0f0f0;
}
.sheet .group .nr, .sheet .names th {
    border-bottom-color: #c8c8c8;
}
.sheet .err td {
    color: #f00000;
}
.sheet .ro {
    background: #f9faf3;
}
.sheet .sw {
    vertical-align: -1px;
}
.sheet .err .active {
    color: #fff;
    background: #0078d7;
    outline: 1px dotted #ff8a1c;
    outline-offset: -2px;
}
.frame {
    position: absolute;
    left: 405px;
    top: 17px;
    width: 341px;
    height: 54px;
    border: 5px solid #e90808;
}
```
